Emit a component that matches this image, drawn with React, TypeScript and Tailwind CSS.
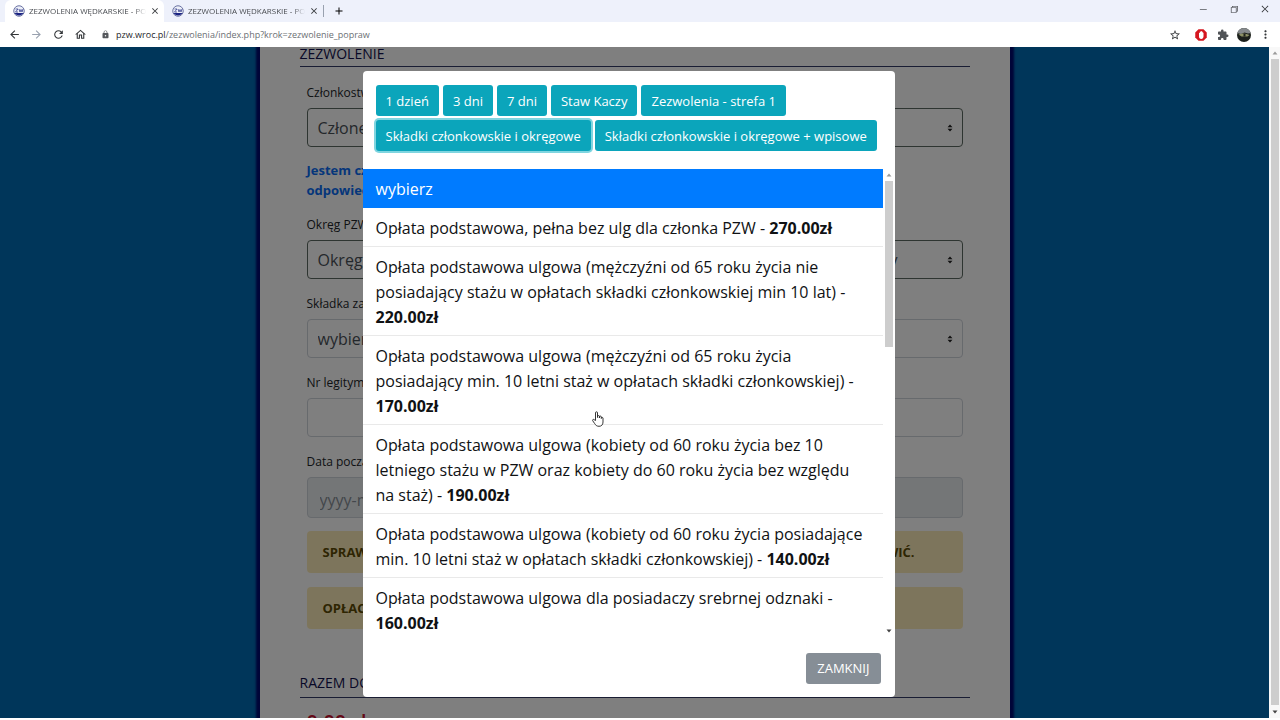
import React, { useState } from "react";
import {
  MdAdd,
  MdArrowBack,
  MdArrowForward,
  MdClose,
  MdExtension,
  MdLock,
  MdMoreVert,
  MdOutlineHome,
  MdRefresh,
  MdStarBorder,
} from "react-icons/md";
import {
  VscChromeClose,
  VscChromeMinimize,
  VscChromeRestore,
} from "react-icons/vsc";

const categories = [
  "1 dzień",
  "3 dni",
  "7 dni",
  "Staw Kaczy",
  "Zezwolenia - strefa 1",
  "Składki członkowskie i okręgowe",
  "Składki członkowskie i okręgowe + wpisowe",
];

const fees = [
  { name: "Opłata podstawowa, pełna bez ulg dla członka PZW", price: "270.00zł" },
  {
    name: "Opłata podstawowa ulgowa (mężczyźni od 65 roku życia nie posiadający stażu w opłatach składki członkowskiej min 10 lat)",
    price: "220.00zł",
  },
  {
    name: "Opłata podstawowa ulgowa (mężczyźni od 65 roku życia posiadający min. 10 letni staż w opłatach składki członkowskiej)",
    price: "170.00zł",
  },
  {
    name: "Opłata podstawowa ulgowa (kobiety od 60 roku życia bez 10 letniego stażu w PZW oraz kobiety do 60 roku życia bez względu na staż)",
    price: "190.00zł",
  },
  {
    name: "Opłata podstawowa ulgowa (kobiety od 60 roku życia posiadające min. 10 letni staż w opłatach składki członkowskiej)",
    price: "140.00zł",
  },
  {
    name: "Opłata podstawowa ulgowa dla posiadaczy srebrnej odznaki",
    price: "160.00zł",
  },
];

const Favicon = () => (
  <svg viewBox="0 0 24 24" className="w-3 h-3 shrink-0">
    <circle cx="12" cy="12" r="10.5" fill="#eceff8" stroke="#6b73a3" strokeWidth="2" />
    <path d="M3 16h18a10.5 10.5 0 0 1-18 0z" fill="#1d2583" />
    <path
      d="M5 8h5l-5 6h5M12 8l2 6 2-5 2 5 2-6"
      fill="none"
      stroke="#3c4590"
      strokeWidth="1.6"
    />
  </svg>
);

const Tab = ({ active }: { active?: boolean }) => (
  <div
    className={`${
      active ? "bg-white rounded-t-md" : ""
    } flex items-center w-[159px] h-full pl-2 gap-1`}
  >
    <Favicon />
    <span className="flex-1 overflow-hidden whitespace-nowrap text-[8px] text-[#4a4d52] mask-r-from-90%">
      ZEZWOLENIA WĘDKARSKIE - PO
    </span>
    <button aria-label="Zamknij kartę" className="pr-1">
      <MdClose className="w-[10px] h-[10px]" />
    </button>
  </div>
);

const Browser = () => (
  <header className="shrink-0 bg-white text-[#333639]">
    <div className="flex h-[22px] bg-[#eef1fb] pl-[5px]">
      <Tab active />
      <Tab />
      <div className="flex items-center">
        <span className="w-px h-3 bg-gray-400" />
        <button aria-label="Nowa karta" className="pl-[9px]">
          <MdAdd className="w-3 h-3 text-black" />
        </button>
      </div>
      <div className="ml-auto flex items-center gap-[21px] pr-[10px] pb-1">
        <button aria-label="Minimalizuj">
          <VscChromeMinimize className="w-[10px] h-[10px]" />
        </button>
        <button aria-label="Przywróć">
          <VscChromeRestore className="w-[10px] h-[10px]" />
        </button>
        <button aria-label="Zamknij">
          <VscChromeClose className="w-[10px] h-[10px]" />
        </button>
      </div>
    </div>
    <div className="flex h-[25px] items-center pl-2 pr-2">
      <div className="flex items-center gap-[9px]">
        <button aria-label="Wstecz">
          <MdArrowBack className="w-[13px] h-[13px]" />
        </button>
        <button aria-label="Dalej">
          <MdArrowForward className="w-[13px] h-[13px] text-gray-400" />
        </button>
        <button aria-label="Odśwież">
          <MdRefresh className="w-[13px] h-[13px]" />
        </button>
        <button aria-label="Strona główna">
          <MdOutlineHome className="w-[13px] h-[13px]" />
        </button>
      </div>
      <MdLock className="ml-[14px] w-[9px] h-[9px] text-[#55585c]" />
      <p className="ml-[6px] text-[9px] text-[#6b6f74]">
        <span className="text-[#26282b]">pzw.wroc.pl</span>
        /zezwolenia/index.php?krok=zezwolenie_popraw
      </p>
      <div className="ml-auto flex items-center">
        <button aria-label="Dodaj zakładkę">
          <MdStarBorder className="w-3 h-3" />
        </button>
        <svg viewBox="0 0 24 24" className="ml-[14px] w-3 h-3">
          <path d="M7 0.5h10L23.500 7v10L17 23.500H7L0.500 17V7z" fill="#d5161f" />
          <path
            d="M8 8v6.500c0 3.500 1.500 5.500 4.500 5.500s4-2 4.500-5V7.500h-1.500V5.500h-2V4h-2v1.500h-2V8z"
            fill="#fff"
          />
        </svg>
        <MdExtension className="ml-[10px] w-3 h-3 text-[#505357]" />
        <svg viewBox="0 0 28 28" className="ml-2 w-[14px] h-[14px]">
          <defs>
            <clipPath id="avatar">
              <circle cx="14" cy="14" r="14" />
            </clipPath>
          </defs>
          <g clipPath="url(#avatar)">
            <rect width="28" height="28" fill="#1c201c" />
            <path d="M0 0h28v10l-6 1-7-2-7 3-8-2z" fill="#85898c" />
            <path d="M3 13l8-2 8 1 6 2-4 3H9z" fill="#8d9166" />
            <path d="M13 12h4v5h-4z" fill="#20231d" />
          </g>
        </svg>
        <button aria-label="Menu" className="ml-2">
          <MdMoreVert className="w-[13px] h-[13px]" />
        </button>
      </div>
    </div>
  </header>
);

const Arrow = ({ down }: { down?: boolean }) => (
  <svg viewBox="0 0 6 4" className="w-[6px] h-1 shrink-0">
    <path
      d={down ? "M0.500 0.500h5L3 3.500z" : "M0.500 3.500h5L3 0.500z"}
      fill={down ? "#444" : "#9a9a9a"}
    />
  </svg>
);

type FieldProps = { id: string; label: string; value: string; valid?: boolean };

const SelectField = ({ id, label, value, valid }: FieldProps) => (
  <div>
    <label htmlFor={id} className="block h-6 text-xs leading-[17px]">
      {label}
    </label>
    <div className="relative">
      <select
        id={id}
        className={`${
          valid ? "border-[#5c6a62]" : "border-[#ced4da]"
        } block appearance-none w-full h-[39px] rounded border pl-[10px] pr-6 text-base text-[#495057]`}
      >
        <option>{value}</option>
      </select>
      <svg
        viewBox="0 0 6 8"
        className="pointer-events-none absolute right-[10px] top-4 w-[6px] h-2"
      >
        <path d="M3 0.500L5.500 3.200h-5zM3 7.500L0.500 4.800h5z" fill="#222" />
      </svg>
    </div>
  </div>
);

const PermitForm = () => (
  <form className="w-[750px] h-full shrink-0 overflow-hidden bg-white px-10 shadow-[0_0_2px_4px_#000a70]">
    <h2 className="h-5 border-b border-[#333a66] text-sm leading-[14px] text-[#10104e]">
      ZEZWOLENIE
    </h2>
    <div className="px-[7px] pt-[17px] text-[#212529]">
      <SelectField id="czlonkostwo" label="Członkostwo" value="Członek PZW" valid />
      <p className="mt-[13px] mb-4 text-[13px] leading-5 font-bold text-[#0a6cf5]">
        Jestem członkiem PZW i posiadam opłaconą składkę.
        <br />
        odpowiedzialność za podane dane ponosi wnioskodawca.
      </p>
      <SelectField
        id="okreg"
        label="Okręg PZW"
        value="Okręg PZW Wrocław wody nizinne i górskie strefa pierwsza, druga, inne rewiry"
        valid
      />
      <div className="mt-4">
        <SelectField id="skladka" label="Składka za" value="wybierz" />
      </div>
      <div className="mt-4">
        <label htmlFor="legitymacja" className="block h-6 text-xs leading-[17px]">
          Nr legitymacji
        </label>
        <input
          id="legitymacja"
          className="block w-full h-[39px] rounded border border-[#ced4da] px-3"
        />
      </div>
      <div className="mt-4">
        <label htmlFor="data" className="block h-6 text-xs leading-[17px]">
          Data początku
        </label>
        <input
          id="data"
          placeholder="yyyy-mm-dd"
          className="block w-full h-[41px] rounded border border-[#ced4da] bg-[#e9ecef] px-3 pt-1 text-base placeholder:text-[#868e96]"
        />
      </div>
      <p className="mt-[13px] flex justify-between h-[42px] rounded bg-[#fbebb9] pl-4 pr-12 text-[13px] leading-[42px] font-bold text-[#5c4a04] whitespace-nowrap">
        <span>SPRAWDŹ WSZYSTKIE DANE.</span>
        <span>PO OPŁACENIU NIE MOŻNA ICH POPRAWIĆ.</span>
      </p>
      <p className="mt-[14px] h-[42px] rounded bg-[#fbebb9] px-4 text-[13px] leading-[42px] font-bold text-[#5c4a04]">
        OPŁACONE ZEZWOLENIE
      </p>
    </div>
    <h2 className="mt-11 h-[25px] border-b border-[#333a66] text-sm leading-5 text-[#10104e]">
      RAZEM DO ZAPŁATY
    </h2>
    <p className="px-[7px] pt-3 text-xl leading-6 font-semibold text-[#c8102e]">0.00 zł</p>
  </form>
);

const FeeDialog = () => {
  const [active, setActive] = useState(5);

  return (
    <div
      role="dialog"
      aria-label="Wybór składki"
      className="relative flex flex-col w-[532px] h-[626px] rounded bg-white"
    >
      <div className="flex flex-wrap gap-1 px-[13px] pt-[14px] pb-[18px]">
        {categories.map((category, i) => (
          <button
            key={category}
            onClick={() => setActive(i)}
            className={`${
              active == i ? "ring-2 ring-[#7fd5e0]" : ""
            } h-[31px] rounded-[3px] bg-[#0ba5bb] px-[10px] pt-[2px] text-[13px] text-white`}
          >
            {category}
          </button>
        ))}
      </div>
      <div className="flex flex-1 min-h-0">
        <ul className="flex-1 overflow-hidden text-base leading-[25px] text-[#101214]">
          <li>
            <button className="block w-full bg-[#007bff] px-[13px] pt-2 pb-[6px] text-left text-white">
              wybierz
            </button>
          </li>
          {fees.map((fee) => (
            <li key={fee.name} className="border-b border-[#e9e9e9] last:border-0">
              <button className="block w-full px-[13px] pt-2 pb-[5px] text-left">
                {fee.name} - <b>{fee.price}</b>
              </button>
            </li>
          ))}
        </ul>
        <div className="flex flex-col items-center justify-between w-3 py-1">
          <Arrow />
          <div className="mt-1 mb-auto w-2 h-[166px] bg-[#cdcdcd]" />
          <Arrow down />
        </div>
      </div>
      <div className="flex justify-end pt-4 pr-[14px] pb-[13px]">
        <button className="h-[31px] rounded-[3px] bg-[#868e96] px-[11px] text-[13px] text-white">
          ZAMKNIJ
        </button>
      </div>
      <svg
        viewBox="0 0 12 16"
        className="pointer-events-none absolute left-[229px] top-[340px] w-3 h-4"
      >
        <path
          d="M3.500 9.500V1.800a1 1 0 0 1 2 0V6.500V5.500a.9.9 0 0 1 1.900 0V7V6a.9.9 0 0 1 1.900 0V7.500V7a.9.9 0 0 1 1.700 0V11c0 2.800-1.600 4.300-4 4.300S3.500 14 2.600 12.500L.700 9.700c-.5-1 .6-1.800 1.400-1z"
          fill="#fff"
          stroke="#222"
          strokeWidth=".9"
        />
      </svg>
    </div>
  );
};

const App = () => {
  return (
    <div className="flex flex-col h-screen overflow-hidden bg-white font-['Open_Sans','Noto_Sans',sans-serif]">
      <Browser />
      <main className="flex flex-1 min-h-0 pb-[2px]">
        <div className="relative flex-1 overflow-hidden bg-[#006cb4]">
          <div className="flex justify-center h-full">
            <PermitForm />
          </div>
          <div className="absolute inset-0 flex justify-center items-start bg-black/50 pt-6 pr-3">
            <FeeDialog />
          </div>
        </div>
        <div className="flex flex-col items-center w-[11px] bg-[#f8f8f8] py-1">
          <Arrow />
          <div className="mt-1 mb-[5px] flex-1 w-2 bg-[#cdcdcd]" />
          <Arrow down />
        </div>
      </main>
    </div>
  );
};

export default App;
